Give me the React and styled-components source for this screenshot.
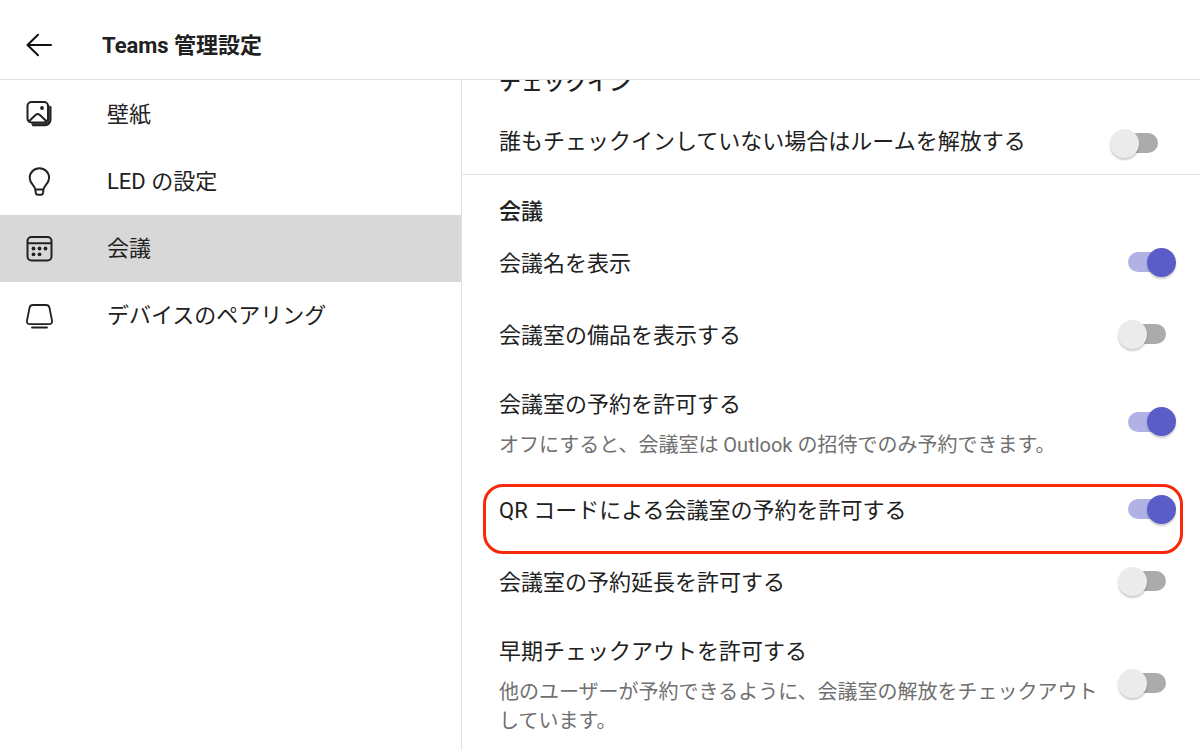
import React, { useState } from "react";
import styled, { createGlobalStyle, css } from "styled-components";

const GlobalStyle = createGlobalStyle`
  * { box-sizing: border-box; }
  html, body, #root { height: 100%; }
  body {
    margin: 0;
    background: #ffffff;
    color: #212121;
    font-family: Roboto, "Noto Sans CJK JP", sans-serif;
    font-size: 22px;
    line-height: 32px;
  }
`;

const Page = styled.div`
  display: flex;
  flex-direction: column;
  height: 100vh;
  overflow: hidden;
`;

const Header = styled.header`
  display: flex;
  align-items: center;
  flex: none;
  gap: 48px;
  height: 80px;
  padding: 11px 24px 0;
  border-bottom: 1px solid #e1e1e1;
`;

const BackButton = styled.button`
  display: flex;
  padding: 0;
  border: 0;
  background: none;
  color: #111111;
  cursor: pointer;
`;

const PageTitle = styled.h1`
  margin: 0;
  padding-top: 2px;
  font-size: 22px;
  line-height: 32px;
  font-weight: 700;
`;

const Body = styled.div`
  display: flex;
  flex: 1;
  min-height: 0;
`;

const Sidebar = styled.nav`
  flex: none;
  width: 38.5%;
  padding-top: 1px;
  border-right: 1px solid #e1e1e1;
`;

const NavLink = styled.a`
  display: flex;
  align-items: center;
  gap: 53px;
  height: 67px;
  padding: 0 24px;
  color: inherit;
  text-decoration: none;
  background: ${(p) => (p.$active ? "#d8d8d8" : "transparent")};
`;

const Icon = styled.svg`
  display: block;
  flex: none;
  width: 30px;
  height: 30px;
  fill: none;
  stroke: currentColor;
  stroke-width: 2;
  stroke-linecap: round;
  stroke-linejoin: round;
`;

const Pane = styled.main`
  flex: 1;
  min-width: 0;
  overflow: hidden;
`;

const Content = styled.div`
  margin-top: -34px;
`;

const Section = styled.section`
  padding-top: 22px;
  & + & {
    border-top: 1px solid #e1e1e1;
  }
`;

const SectionTitle = styled.h2`
  margin: 0;
  padding: 0 37px;
  font-size: 22px;
  line-height: 30px;
  font-weight: 500;
`;

const Row = styled.div`
  position: relative;
  display: flex;
  align-items: center;
  gap: 16px;
  min-height: 72px;
  padding: 14px 24px 14px 37px;
  ${(p) =>
    p.$bottom &&
    css`
      align-items: flex-end;
      min-height: 76px;
      padding-right: 32px;
    `}
`;

const Highlight = styled.div`
  position: absolute;
  inset: 10px 17px -8px 21px;
  border: 3px solid #f7290a;
  border-radius: 20px;
  pointer-events: none;
`;

const RowText = styled.div`
  display: flex;
  flex: 1;
  flex-direction: column;
  gap: 8px;
  min-width: 0;
  padding-top: 2px;
`;

const Label = styled.label`
  line-height: 36px;
`;

const Hint = styled.p`
  margin: 0;
  color: #707070;
  font-size: 20px;
  line-height: 29px;
`;

const Switch = styled.input`
  appearance: none;
  display: grid;
  flex: none;
  align-items: center;
  width: 58px;
  height: 30px;
  margin: 0 0 2px;
  cursor: pointer;

  &::before,
  &::after {
    content: "";
    grid-area: 1 / 1;
  }
  &::before {
    height: 20px;
    margin: 0 10px;
    border-radius: 10px;
    background: #ababab;
  }
  &::after {
    width: 29px;
    height: 29px;
    border-radius: 50%;
    background: #ebebeb;
    box-shadow: 0 2px 2px rgba(0, 0, 0, 0.2);
  }
  &:checked::before {
    background: #b0b1e5;
  }
  &:checked::after {
    justify-self: end;
    background: #5a5cc7;
  }
`;

const ArrowIcon = () => (
  <Icon viewBox="0 0 30 30" aria-hidden="true">
    <path d="M27 15H4M14 4.800L3.500 15L14 25.200" />
  </Icon>
);

const WallpaperIcon = () => (
  <Icon viewBox="0 0 30 30" aria-hidden="true">
    <rect x="3.500" y="2" width="20.500" height="20.500" rx="4" />
    <path d="M5 21.300L11.800 14.800Q13.700 13.200 15.600 14.800L22.500 21.300" />
    <circle cx="18" cy="8" r="1.900" fill="currentColor" stroke="none" />
    <path d="M26.500 7V19.500A5.500 5.500 0 0 1 21 25.200H9" />
    <path d="M25 6V20.500Q24.500 23.500 21 24H8" strokeWidth="1.400" />
  </Icon>
);

const BulbIcon = () => (
  <Icon viewBox="0 0 30 30" aria-hidden="true">
    <path d="M11.300 22.500C11 18.500 5.700 16.500 5.700 10.900A9.700 9.700 0 0 1 25.100 10.900C25.100 16.500 19.800 18.500 19.500 22.500L19 26Q18.700 27.800 17 27.800H13.800Q12.100 27.800 11.800 26ZM11.300 22.500H19.500" />
  </Icon>
);

const CalendarIcon = () => (
  <Icon viewBox="0 0 30 30" aria-hidden="true">
    <rect x="3.500" y="3" width="24" height="23.500" rx="4" />
    <path d="M4 9.200H27" />
    <g fill="currentColor" stroke="none">
      <circle cx="9.500" cy="14.500" r="1.900" />
      <circle cx="15.500" cy="14.500" r="1.900" />
      <circle cx="21.500" cy="14.500" r="1.900" />
      <circle cx="9.500" cy="20.300" r="1.900" />
      <circle cx="15.500" cy="20.300" r="1.900" />
    </g>
  </Icon>
);

const DeviceIcon = () => (
  <Icon viewBox="0 0 30 30" aria-hidden="true">
    <path
      d="M9 4H22Q24.800 4 25.400 6.500L28 19.500Q28.600 23.200 25 23.200H6Q2.400 23.200 3 19.500L5.600 6.500Q6.200 4 9 4Z"
      strokeWidth="1.800"
    />
    <path d="M8 26.500H23" strokeWidth="1.800" />
  </Icon>
);

const navItems = [
  { id: "wallpaper", label: "壁紙", Glyph: WallpaperIcon },
  { id: "led", label: "LED の設定", Glyph: BulbIcon },
  { id: "meetings", label: "会議", Glyph: CalendarIcon },
  { id: "pairing", label: "デバイスのペアリング", Glyph: DeviceIcon },
];

const meetingSettings = [
  { id: "names", label: "会議名を表示", on: true },
  { id: "equipment", label: "会議室の備品を表示する" },
  {
    id: "reserve",
    label: "会議室の予約を許可する",
    hint: "オフにすると、会議室は Outlook の招待でのみ予約できます。",
    on: true,
  },
  { id: "qr", label: "QR コードによる会議室の予約を許可する", on: true, highlighted: true },
  { id: "extend", label: "会議室の予約延長を許可する" },
  {
    id: "checkout",
    label: "早期チェックアウトを許可する",
    hint: "他のユーザーが予約できるように、会議室の解放をチェックアウトしています。",
  },
];

function Setting({ id, label, hint, on = false, highlighted, bottom }) {
  const [checked, setChecked] = useState(on);
  return (
    <Row $bottom={bottom}>
      <RowText>
        <Label htmlFor={id}>{label}</Label>
        {hint && <Hint id={`${id}-hint`}>{hint}</Hint>}
      </RowText>
      <Switch
        type="checkbox"
        role="switch"
        id={id}
        checked={checked}
        aria-describedby={hint ? `${id}-hint` : undefined}
        onChange={(e) => setChecked(e.target.checked)}
      />
      {highlighted && <Highlight />}
    </Row>
  );
}

export default function App() {
  const [active, setActive] = useState("meetings");
  return (
    <Page lang="ja">
      <GlobalStyle />
      <Header>
        <BackButton type="button" aria-label="戻る">
          <ArrowIcon />
        </BackButton>
        <PageTitle>Teams 管理設定</PageTitle>
      </Header>
      <Body>
        <Sidebar>
          {navItems.map(({ id, label, Glyph }) => (
            <NavLink
              key={id}
              href={`#${id}`}
              $active={id === active}
              aria-current={id === active ? "page" : undefined}
              onClick={() => setActive(id)}
            >
              <Glyph />
              {label}
            </NavLink>
          ))}
        </Sidebar>
        <Pane>
          <Content>
            <Section>
              <SectionTitle>チェックイン</SectionTitle>
              <Setting id="release" label="誰もチェックインしていない場合はルームを解放する" bottom />
            </Section>
            <Section>
              <SectionTitle>会議</SectionTitle>
              {meetingSettings.map((s) => (
                <Setting key={s.id} {...s} />
              ))}
            </Section>
          </Content>
        </Pane>
      </Body>
    </Page>
  );
}
